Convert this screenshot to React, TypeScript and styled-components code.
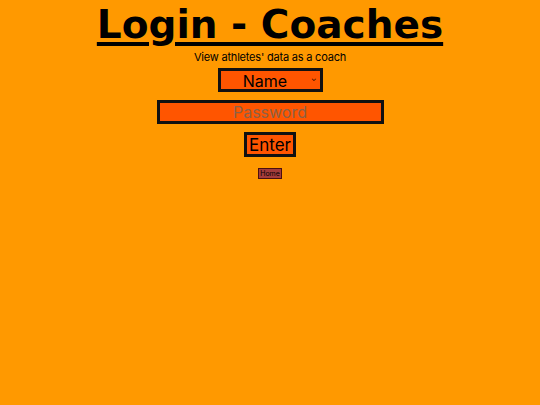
import React from 'react';
import styled, { createGlobalStyle } from 'styled-components';

const GlobalStyle = createGlobalStyle`
  body {
    margin: 0;
    background: #ff9900;
    font-family: 'Inter', 'Noto Sans', sans-serif;
    color: #000;
  }
`;

const Page = styled.main`
  display: flex;
  flex-direction: column;
  align-items: center;
  min-height: 405px;
`;

const Title = styled.h1`
  margin: 0;
  padding-top: 2px;
  font-family: 'DejaVu Sans', 'Inter', sans-serif;
  font-size: 39px;
  font-weight: 700;
  line-height: 46px;
  text-decoration: underline;
  text-decoration-thickness: 4px;
  text-underline-offset: 4px;
`;

const Subtitle = styled.p`
  margin: 2px 0 4px;
  font-size: 11px;
  line-height: 14px;
  letter-spacing: -0.2px;
`;

const Field = `
  box-sizing: border-box;
  background: #ff5500;
  border: 3px solid #111;
  font-family: 'Inter', 'Noto Sans', sans-serif;
  color: #000;
  font-size: 16px;
  text-align: center;
  outline: none;
`;

const SelectWrap = styled.div`
  position: relative;
  width: 105px;
  height: 24px;
  margin-bottom: 8px;
`;

const Select = styled.select`
  ${Field}
  width: 100%;
  height: 100%;
  appearance: none;
  padding: 0 10px 0 0;
  text-align-last: center;
`;

const Arrow = styled.span`
  position: absolute;
  right: 6px;
  top: 6px;
  font-size: 7px;
  pointer-events: none;
`;

const Password = styled.input`
  ${Field}
  width: 227px;
  height: 24px;
  padding: 0;
  margin-bottom: 8px;
  &::placeholder {
    color: #8c6246;
  }
`;

const EnterButton = styled.button`
  ${Field}
  height: 25px;
  padding: 0 2px;
  font-size: 17px;
  margin-bottom: 11px;
`;

const HomeButton = styled.button`
  box-sizing: border-box;
  background: #a33c3c;
  border: 1px solid #4a1010;
  font-family: 'Inter', 'Noto Sans', sans-serif;
  font-size: 7px;
  line-height: 9px;
  padding: 0 1px;
  color: #000;
`;

export default function App() {
  return (
    <>
      <GlobalStyle />
      <Page>
        <Title>Login - Coaches</Title>
        <Subtitle>View athletes' data as a coach</Subtitle>
        <SelectWrap>
          <Select defaultValue="Name">
            <option>Name</option>
          </Select>
          <Arrow>⌄</Arrow>
        </SelectWrap>
        <Password type="password" placeholder="Password" />
        <EnterButton>Enter</EnterButton>
        <HomeButton>Home</HomeButton>
      </Page>
    </>
  );
}
